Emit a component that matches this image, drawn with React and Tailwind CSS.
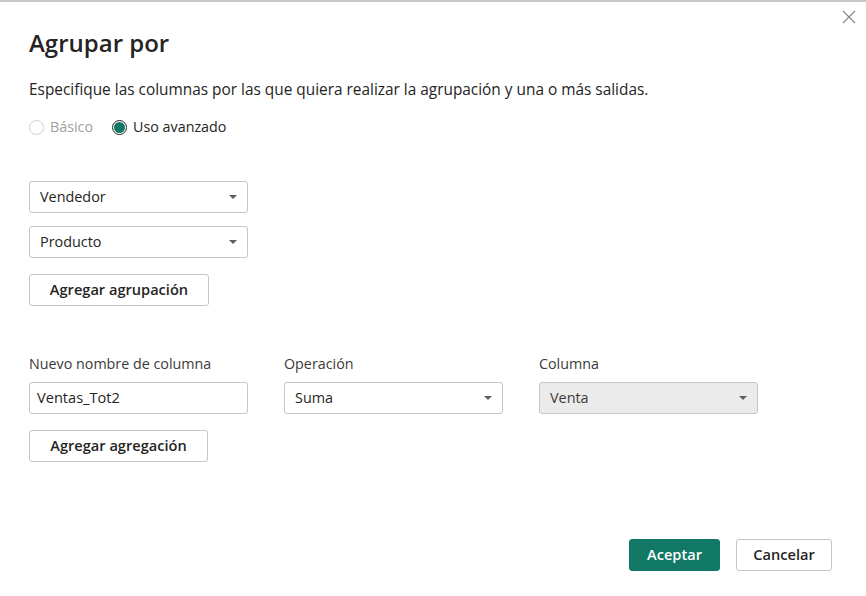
const font = { fontFamily: '"Open Sans", "Noto Sans", sans-serif' };

function Caret() {
  return (
    <svg width="8" height="4" viewBox="0 0 8 4" className="shrink-0">
      <path d="M0 0 L8 0 L4 4 Z" fill="#605e5c" />
    </svg>
  );
}

function Select({ value, disabled }) {
  return (
    <div
      className={
        "h-[32px] w-[219px] flex items-center justify-between pl-[10px] pr-[10px] rounded-[3px] border text-[14.4px] " +
        (disabled
          ? "bg-[#ebebeb] border-[#c8c6c4] text-[#3b3a39]"
          : "bg-white border-[#c8c6c4] text-[#252423]")
      }
    >
      <span>{value}</span>
      <Caret />
    </div>
  );
}

function Button({ children, primary, className = "" }) {
  return (
    <button
      className={
        "h-[32px] rounded-[3px] text-[14.6px] font-semibold flex items-center justify-center " +
        (primary
          ? "bg-[#117865] text-white border border-[#117865] "
          : "bg-white text-[#252423] border border-[#c8c6c4] ") +
        className
      }
    >
      {children}
    </button>
  );
}

function Radio({ checked, disabled, label }) {
  return (
    <label className="flex items-center gap-[6px]">
      <span
        className={
          "w-[15px] h-[15px] rounded-full border flex items-center justify-center " +
          (checked ? "border-[#252423]" : "border-[#d2d0ce]")
        }
      >
        {checked && <span className="w-[11px] h-[11px] rounded-full bg-[#117865]" />}
      </span>
      <span className={disabled ? "text-[#a19f9d]" : "text-[#252423]"}>{label}</span>
    </label>
  );
}

export default function App() {
  return (
    <div className="w-[866px] h-[596px] bg-white relative overflow-hidden" style={font}>
      <div className="h-[2px] bg-[#c8c8c8]" />

      <button className="absolute right-[8px] top-[8px] w-[18px] h-[18px] flex items-center justify-center">
        <svg width="14" height="14" viewBox="0 0 14 14">
          <path d="M1 1 L13 13 M13 1 L1 13" stroke="#8a8886" strokeWidth="1.2" />
        </svg>
      </button>

      <div className="pl-[29px] pt-[24px]">
        <h1 className="text-[24px] leading-[34px] font-semibold text-[#252423]">Agrupar por</h1>

        <p className="mt-[18px] text-[15.4px] leading-[24px] text-[#252423]">
          Especifique las columnas por las que quiera realizar la agrupación y una o más salidas.
        </p>

        <div className="mt-[13px] flex items-center gap-[19px] text-[14.3px] leading-[24px]">
          <Radio disabled label="Básico" />
          <Radio checked label="Uso avanzado" />
        </div>

        <div className="mt-[42px] flex flex-col gap-[13px]">
          <Select value="Vendedor" />
          <Select value="Producto" />
        </div>

        <Button className="mt-[16px] w-[180px]">Agregar agrupación</Button>

        <div className="mt-[47px] flex gap-[36px]">
          <div className="flex flex-col">
            <span className="text-[14.3px] leading-[22px] text-[#3b3a39]">Nuevo nombre de columna</span>
            <div className="mt-[7px] h-[32px] w-[219px] flex items-center px-[7px] rounded-[3px] border border-[#c8c6c4] text-[14.6px] text-[#252423]">
              Ventas_Tot2
            </div>
          </div>
          <div className="flex flex-col">
            <span className="text-[14.3px] leading-[22px] text-[#3b3a39]">Operación</span>
            <div className="mt-[7px]">
              <Select value="Suma" />
            </div>
          </div>
          <div className="flex flex-col">
            <span className="text-[14.3px] leading-[22px] text-[#3b3a39]">Columna</span>
            <div className="mt-[7px]">
              <Select value="Venta" disabled />
            </div>
          </div>
        </div>

        <Button className="mt-[16px] w-[179px]">Agregar agregación</Button>
      </div>

      <div className="absolute right-[34px] bottom-[25px] flex gap-[16px]">
        <Button primary className="w-[91px]">Aceptar</Button>
        <Button className="w-[96px]">Cancelar</Button>
      </div>
    </div>
  );
}
